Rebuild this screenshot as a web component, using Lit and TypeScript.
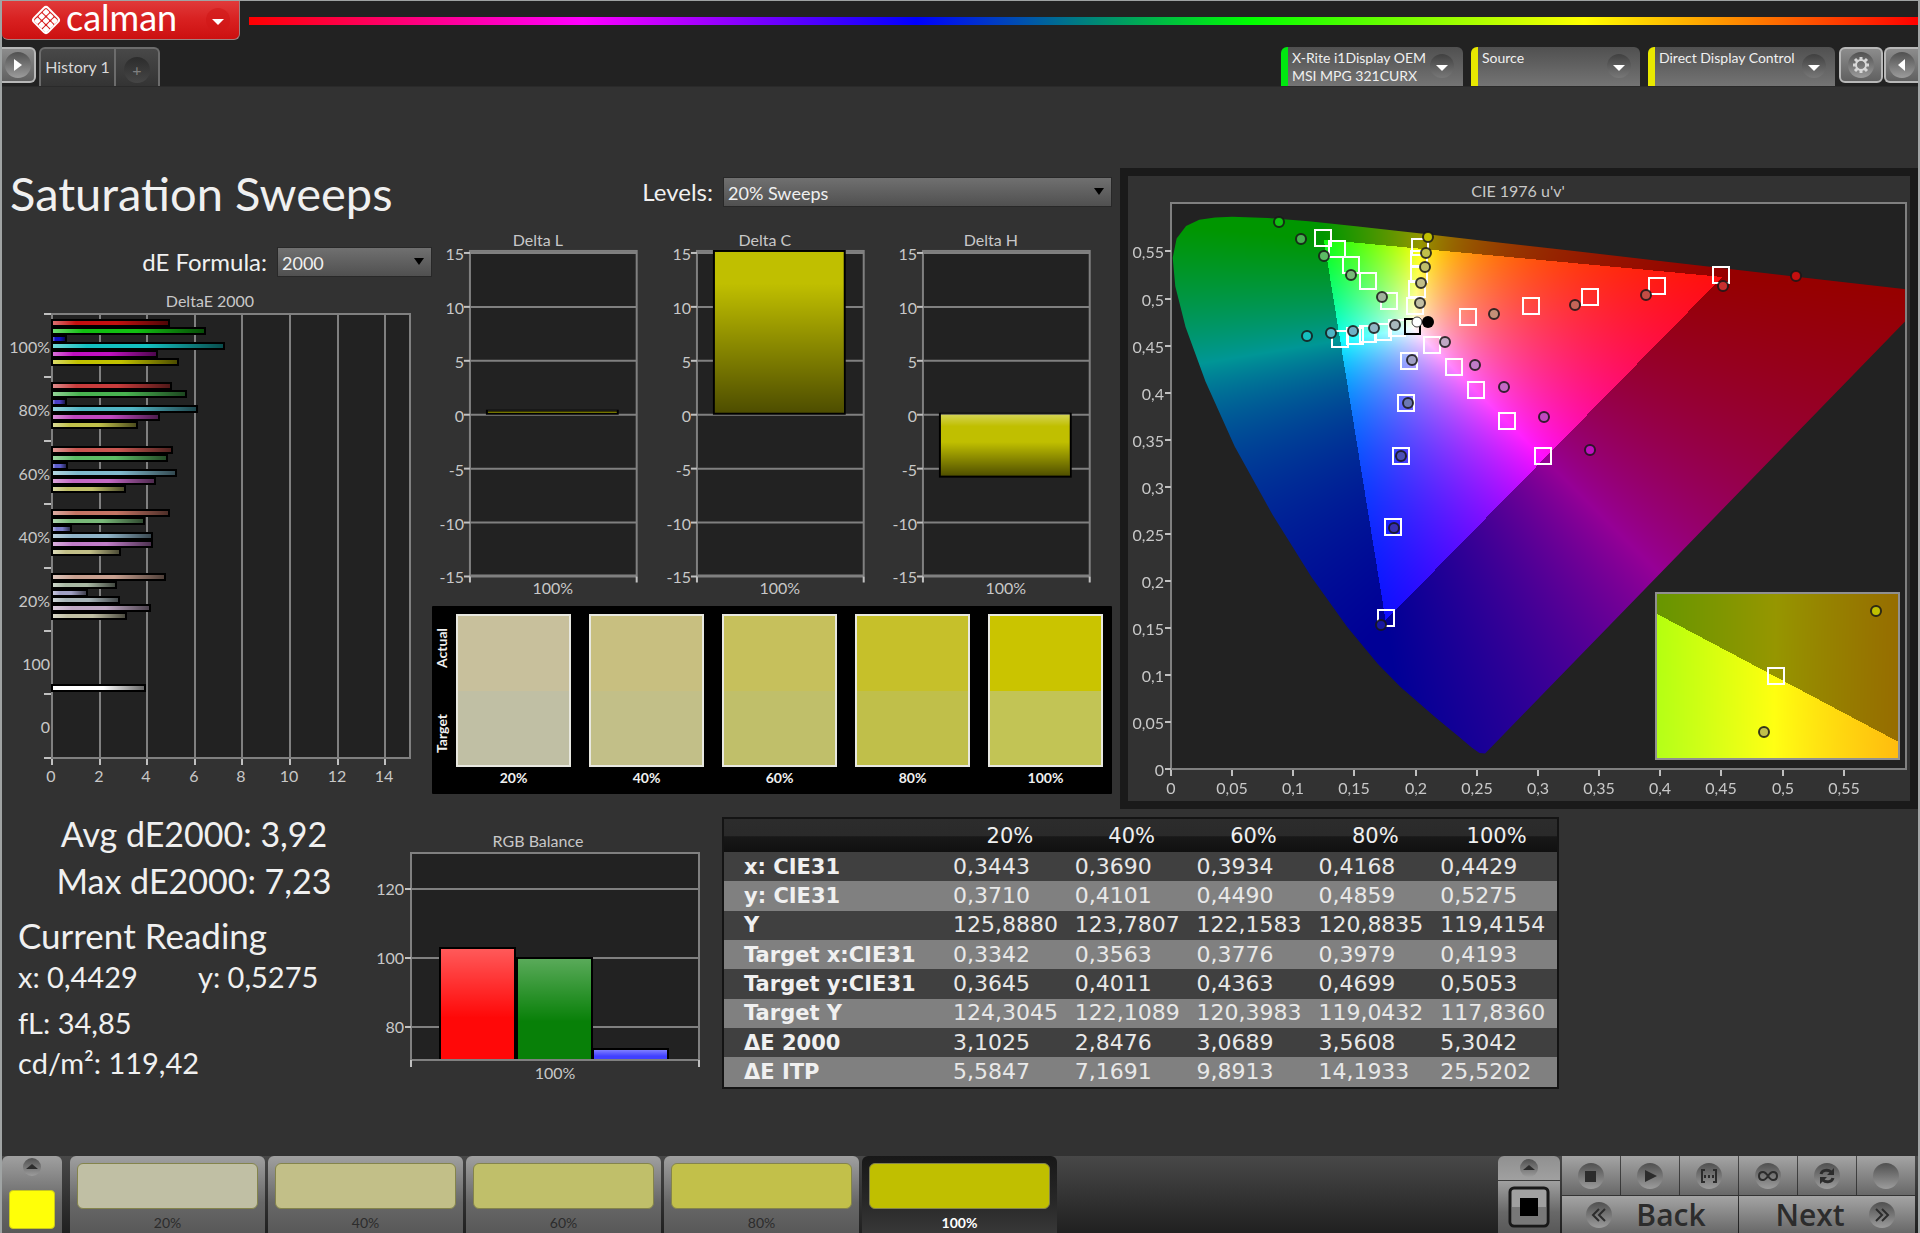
import { LitElement, html, svg, css } from "lit";
import { customElement, query, state } from "lit/decorators.js";
import { classMap } from "lit/directives/class-map.js";
import { styleMap } from "lit/directives/style-map.js";

/* ---------- measurement data ---------- */

interface SweepGroup {
  label: string;
  bars: [number, string][];
}

const DELTA_E: SweepGroup[] = [
  { label: "100%", bars: [[4.92, "#c40f0f"], [6.43, "#12c012"], [0.59, "#1010c4"], [7.23, "#14c0c0"], [4.41, "#c010c0"], [5.3, "#c0c000"]] },
  { label: "80%", bars: [[5, "#c83c3c"], [5.63, "#48b250"], [0.59, "#4a3cc4"], [6.11, "#50b4c4"], [4.48, "#c048c0"], [3.56, "#c0c04a"]] },
  { label: "60%", bars: [[5.06, "#c85650"], [4.85, "#5cbc64"], [0.63, "#5c5ccc"], [5.19, "#80b8cc"], [4.31, "#c468c4"], [3.07, "#c0bf6a"]] },
  { label: "40%", bars: [[4.92, "#c47464"], [3.87, "#78b878"], [0.78, "#7c7cc8"], [4.2, "#90b4c8"], [4.2, "#c07cc8"], [2.85, "#c2bf88"]] },
  { label: "20%", bars: [[4.75, "#c8a090"], [2.67, "#a8b8a4"], [1.45, "#a0a0c4"], [2.83, "#a8b4b8"], [4.1, "#c0a8c4"], [3.1, "#c0bfa4"]] },
  { label: "100", bars: [] },
  { label: "0", bars: [] },
];

const DELTAS = [
  { title: "Delta L", value: 0.35 },
  { title: "Delta C", value: 15.3 },
  { title: "Delta H", value: -5.7 },
];

const SWATCHES = [
  { label: "20%", actual: "#c8c09c", target: "#c0bfa4" },
  { label: "40%", actual: "#c8bf80", target: "#c2bf88" },
  { label: "60%", actual: "#c6c05c", target: "#c0bf6a" },
  { label: "80%", actual: "#c6c02a", target: "#c0bf4a" },
  { label: "100%", actual: "#cac400", target: "#c2c455" },
];

const STEPS = [
  { label: "20%", color: "#c0bfa4" },
  { label: "40%", color: "#c2bf88" },
  { label: "60%", color: "#c0bf6a" },
  { label: "80%", color: "#c2c04a" },
  { label: "100%", color: "#c0bf00" },
];

const TABLE: [string, ...string[]][] = [
  ["x: CIE31", "0,3443", "0,3690", "0,3934", "0,4168", "0,4429"],
  ["y: CIE31", "0,3710", "0,4101", "0,4490", "0,4859", "0,5275"],
  ["Y", "125,8880", "123,7807", "122,1583", "120,8835", "119,4154"],
  ["Target x:CIE31", "0,3342", "0,3563", "0,3776", "0,3979", "0,4193"],
  ["Target y:CIE31", "0,3645", "0,4011", "0,4363", "0,4699", "0,5053"],
  ["Target Y", "124,3045", "122,1089", "120,3983", "119,0432", "117,8360"],
  ["ΔE 2000", "3,1025", "2,8476", "3,0689", "3,5608", "5,3042"],
  ["ΔE ITP", "5,5847", "7,1691", "9,8913", "14,1933", "25,5202"],
];

/* Spectral locus in u'v', 380 nm to 700 nm. */
const LOCUS: [number, number][] = [
  [0.2568, 0.0166], [0.2522, 0.0169], [0.2461, 0.0226], [0.2347, 0.035], [0.2161, 0.0549],
  [0.1877, 0.0871], [0.169, 0.1119], [0.1441, 0.151], [0.1147, 0.2044], [0.0828, 0.2708],
  [0.0521, 0.3427], [0.0282, 0.4117], [0.0119, 0.4698], [0.0035, 0.5131], [0.0014, 0.5432],
  [0.0046, 0.5638], [0.0123, 0.577], [0.0231, 0.5837], [0.036, 0.5861], [0.0501, 0.5868],
  [0.0792, 0.5856], [0.1127, 0.5821], [0.1531, 0.5766], [0.2026, 0.5694], [0.2623, 0.5604],
  [0.3315, 0.5501], [0.4035, 0.5393], [0.4692, 0.5296], [0.5203, 0.5219], [0.583, 0.5125],
  [0.6234, 0.5065],
];

/* Chart positions of the target squares. */
const TARGETS: [number, number][] = [
  [1323, 238], [1337, 249], [1351, 265], [1368, 281], [1389, 301],
  [1420, 247], [1419, 259], [1419, 274], [1417, 289], [1415, 306],
  [1340, 339], [1355, 336], [1368, 334], [1383, 332], [1397, 328],
  [1432, 345], [1454, 367], [1476, 390], [1507, 421], [1543, 456],
  [1409, 361], [1406, 403], [1401, 456], [1393, 527], [1386, 618],
  [1468, 317], [1531, 306], [1590, 297], [1657, 286], [1721, 275],
];

/* Chart positions and colours of the measured points. */
const READINGS: [number, number, string][] = [
  [1279, 222, "#12c012"], [1301, 239, "#48b250"], [1324, 256, "#5cbc64"], [1351, 275, "#78b878"], [1382, 297, "#a0b09c"],
  [1428, 237, "#c0c000"], [1426, 253, "#c0c04a"], [1425, 267, "#c0bf6a"], [1421, 283, "#c2bf88"], [1420, 303, "#c0bfa4"],
  [1307, 336, "#14c0c0"], [1331, 333, "#50b4c4"], [1353, 331, "#70b0c4"], [1374, 328, "#90b4c4"], [1395, 325, "#a8b8bc"],
  [1445, 342, "#c0a8c4"], [1475, 365, "#c07cc8"], [1504, 387, "#c468c4"], [1544, 417, "#c048c0"], [1590, 450, "#c010c0"],
  [1412, 360, "#a0a0c4"], [1408, 403, "#6c78b4"], [1401, 456, "#4c50b4"], [1394, 528, "#3830b0"], [1381, 625, "#1818a0"],
  [1494, 314, "#c49078"], [1575, 305, "#c46458"], [1646, 295, "#c44c44"], [1723, 286, "#c83030"], [1796, 276, "#c40f0f"],
];

const PLOT = { left: 1171, top: 203, right: 1906, bottom: 769, perU: 1223, perV: 941 };
const INSET = { left: 1656, top: 593, width: 243, height: 166 };

/* ---------- chromaticity colour ---------- */

function chromaColor(u: number, v: number): [number, number, number] {
  const d = 6 * u - 16 * v + 12;
  const x = (9 * u) / d;
  const y = Math.max((4 * v) / d, 0.0001);
  const X = x / y;
  const Z = (1 - x - y) / y;
  const rgb = [
    3.2406 * X - 1.5372 - 0.4986 * Z,
    -0.9689 * X + 1.8758 + 0.0415 * Z,
    0.0557 * X - 0.204 + 1.057 * Z,
  ];
  const inside = Math.min(...rgb) >= 0;
  const max = Math.max(...rgb);
  const out = rgb.map((c) => {
    const n = Math.max(0, c) / max;
    return inside ? 14 + 241 * n : 150 * n;
  });
  return [out[0], out[1], out[2]];
}

function paint(canvas: HTMLCanvasElement, uv: (x: number, y: number) => [number, number]) {
  const ctx = canvas.getContext("2d")!;
  const { width, height } = canvas;
  const image = ctx.createImageData(width, height);
  for (let j = 0; j < height; j++) {
    for (let i = 0; i < width; i++) {
      const c = chromaColor(...uv(i, j));
      const k = (j * width + i) * 4;
      image.data[k] = c[0];
      image.data[k + 1] = c[1];
      image.data[k + 2] = c[2];
      image.data[k + 3] = 255;
    }
  }
  ctx.putImageData(image, 0, 0);
  return ctx;
}

const shade = svg`
  <defs>
    <linearGradient id="across"><stop offset="0" stop-color="#fff" stop-opacity=".4"/><stop offset=".2" stop-color="#fff" stop-opacity="0"/><stop offset=".55" stop-color="#000" stop-opacity="0"/><stop offset="1" stop-color="#000" stop-opacity=".6"/></linearGradient>
    <linearGradient id="down" x2="0" y2="1"><stop offset="0" stop-color="#fff" stop-opacity=".35"/><stop offset=".2" stop-color="#fff" stop-opacity="0"/><stop offset=".45" stop-color="#000" stop-opacity="0"/><stop offset="1" stop-color="#000" stop-opacity=".6"/></linearGradient>
    <linearGradient id="deep" x2="0" y2="1"><stop offset=".2" stop-color="#000" stop-opacity="0"/><stop offset="1" stop-color="#000" stop-opacity=".6"/></linearGradient>
    <linearGradient id="gloss" x2="0" y2="1"><stop offset="0" stop-color="#fff" stop-opacity=".33"/><stop offset=".62" stop-color="#fff" stop-opacity="0"/></linearGradient>
  </defs>`;

const chartStyles = css`
  :host { display: block; min-width: 0; }
  svg { display: block; width: 100%; height: auto; }
  text { font: 16px Lato, "Noto Sans", sans-serif; fill: #c8c8c8; }
  .mid { text-anchor: middle; }
  .end { text-anchor: end; }
  .plot { fill: #222; stroke: #808080; stroke-width: 2; }
  .grid { stroke: #808080; stroke-width: 2; fill: none; }
  .tick { stroke: #c0c0c0; stroke-width: 2; fill: none; }
  .edge { stroke: #000; stroke-width: 2; }
`;

/* ---------- charts ---------- */

@customElement("delta-e-chart")
class DeltaEChart extends LitElement {
  static styles = chartStyles;
  render() {
    const x = (n: number) => Math.round(52 + n * 23.8);
    const y = (i: number) => Math.round(314 + i * 63.4);
    const marks = [0, 2, 4, 6, 8, 10, 12, 14];
    const bar = (value: number, color: string, cy: number) => svg`
      <rect class="edge" x="52" y=${cy - 3} width=${x(value) - 52} height="6" fill=${color}/>
      <rect x="53" y=${cy - 2} width=${x(value) - 54} height="4" fill="url(#across)"/>`;
    return html`
      <svg viewBox="2 288 430 506" role="img" aria-label="DeltaE 2000">
        ${shade}
        <text class="mid" x="210" y="307">DeltaE 2000</text>
        <rect class="plot" x="52" y="314" width="358" height="444"/>
        ${marks.map((m) => svg`
          <path class="grid" d="M${x(m)} 314V758"/>
          <path class="tick" d="M${x(m)} 759v6"/>
          <text class="mid" x=${x(m) - 1} y="782">${m}</text>`)}
        ${[0, 1, 2, 3, 4, 5, 6, 7].map((i) => svg`<path class="tick" d="M44 ${y(i)}h7"/>`)}
        ${DELTA_E.map((g, i) => svg`
          <text class="end" x="50" y=${y(i) + 39}>${g.label}</text>
          ${g.bars.map(([v, c], k) => bar(v, c, y(i) + 9 + Math.round(k * 7.8)))}`)}
        ${bar(3.92, "#fff", 688)}
      </svg>`;
  }
}

@customElement("delta-charts")
class DeltaCharts extends LitElement {
  static styles = [chartStyles, css`
    .row { display: grid; grid-template-columns: repeat(3, 1fr); }
  `];
  render() {
    const y = (n: number) => Math.round(415 - n * 10.8);
    return html`<div class="row">
      ${DELTAS.map(({ title, value }) => {
        const top = Math.max(251, value > 0 ? y(value) : 414);
        const bottom = value > 0 ? 414 : y(value);
        return html`
          <svg viewBox="0 228 227 370" role="img" aria-label=${title}>
            ${shade}
            <text class="mid" x="106" y="246">${title}</text>
            <rect class="plot" x="38" y="251" width="167" height="325"/>
            ${[15, 10, 5, 0, -5, -10, -15].map((m) => svg`
              <path class="grid" d="M38 ${y(m)}h167"/>
              <path class="tick" d="M32 ${y(m)}h6"/>
              <text class="end" x="32" y=${y(m) + 7}>${m}</text>`)}
            <path class="tick" d="M38 577v6M205 577v6"/>
            <rect class="edge" x="55" y=${top} width="131" height=${bottom - top} fill="#c0bf00"/>
            <rect x="56" y=${top} width="129" height=${bottom - top} fill=${value > 10 ? "url(#deep)" : "url(#down)"}/>
            <text class="mid" x="121" y="595">100%</text>
          </svg>`;
      })}
    </div>`;
  }
}

@customElement("rgb-balance")
class RgbBalance extends LitElement {
  static styles = chartStyles;
  render() {
    const bars: [number, number, string][] = [[440, 948, "#ff0808"], [517, 958, "#088008"], [593, 1049, "#4040ff"]];
    return html`
      <svg viewBox="364 809 358 275" role="img" aria-label="RGB Balance">
        ${shade}
        <text class="mid" x="538" y="847">RGB Balance</text>
        <rect class="plot" x="411" y="853" width="288" height="207"/>
        ${[[120, 889], [100, 958], [80, 1027]].map(([m, y]) => svg`
          <path class="grid" d="M411 ${y}h288"/>
          <path class="tick" d="M405 ${y}h6"/>
          <text class="end" x="404" y=${y + 6}>${m}</text>`)}
        ${bars.map(([x, y, c]) => svg`
          <rect class="edge" x=${x} y=${y} width="75" height=${1060 - y} fill=${c}/>
          <rect x=${x + 1} y=${y + 1} width="73" height=${1059 - y} fill="url(#gloss)"/>`)}
        <path class="grid" d="M411 1060h288"/>
        <path class="tick" d="M411 1060v7M699 1060v7"/>
        <text class="mid" x="555" y="1079">100%</text>
      </svg>`;
  }
}

@customElement("cie-chart")
class CieChart extends LitElement {
  static styles = [chartStyles, css`
    canvas { display: block; }
    .target { fill: none; stroke: #fff; stroke-width: 2; }
    .white-target { fill: none; stroke: #000; stroke-width: 2; }
    .reading { stroke: #181818; stroke-opacity: .85; stroke-width: 2; }
    .inset { fill: none; stroke: #909090; stroke-width: 2; }
  `];

  @query(".diagram") diagram!: HTMLCanvasElement;
  @query(".detail") detail!: HTMLCanvasElement;

  firstUpdated() {
    const { left, top, bottom, perU, perV } = PLOT;
    const ctx = paint(this.diagram, (i, j) => [(i + 0.5) / perU, (bottom - top - j - 0.5) / perV]);
    ctx.globalCompositeOperation = "destination-in";
    ctx.beginPath();
    LOCUS.forEach(([u, v]) => ctx.lineTo(u * perU, bottom - top - v * perV));
    ctx.closePath();
    ctx.fill();
    paint(this.detail, (i, j) => [
      0.2042 + (INSET.left + i - 1776) * 0.00017,
      0.5529 - (INSET.top + j - 676) * 0.000039,
    ]);
  }

  render() {
    const { left, top, right, bottom, perU, perV } = PLOT;
    const steps = Array.from({ length: 12 }, (_, i) => i * 0.05);
    const name = (n: number) => String(Number(n.toFixed(2))).replace(".", ",");
    return html`
      <svg viewBox="1128 176 782 625" role="img" aria-label="CIE 1976 u'v'">
        <text class="mid" x="1518" y="197">CIE 1976 u'v'</text>
        <rect class="plot" x=${left} y=${top} width=${right - left} height=${bottom - top}/>
        <foreignObject x=${left} y=${top} width=${right - left} height=${bottom - top}>
          <canvas class="diagram" width=${right - left} height=${bottom - top}></canvas>
        </foreignObject>
        <rect class="grid" x=${left} y=${top} width=${right - left} height=${bottom - top}/>
        ${steps.map((s) => {
          const x = Math.round(left + s * perU);
          const y = Math.round(bottom - s * perV);
          return svg`
            <path class="tick" d="M${x} ${bottom + 1}v6M${left - 6} ${y}h6"/>
            <text class="mid" x=${x} y="794">${name(s)}</text>
            <text class="end" x="1164" y=${y + 7}>${name(s)}</text>`;
        })}
        ${TARGETS.map(([x, y]) => svg`<rect class="target" x=${x - 8} y=${y - 8} width="16" height="16"/>`)}
        <rect class="white-target" x="1405" y="319" width="15" height="15"/>
        ${READINGS.map(([x, y, c]) => svg`<circle class="reading" cx=${x} cy=${y} r="5" fill=${c}/>`)}
        <circle cx="1417" cy="322" r="5" fill="#fff" stroke="#404040" stroke-width="1"/>
        <circle cx="1428" cy="322" r="6" fill="#000"/>
        <foreignObject x=${INSET.left} y=${INSET.top} width=${INSET.width} height=${INSET.height}>
          <canvas class="detail" width=${INSET.width} height=${INSET.height}></canvas>
        </foreignObject>
        <rect class="inset" x=${INSET.left} y=${INSET.top} width=${INSET.width} height=${INSET.height}/>
        <rect class="target" x="1768" y="668" width="16" height="16"/>
        <circle class="reading" cx="1876" cy="611" r="5" fill="#c0c000"/>
        <circle class="reading" cx="1764" cy="732" r="5" fill="#c0c04a"/>
      </svg>`;
  }
}

/* ---------- icons ---------- */

const arrowDown = html`<svg class="knob" viewBox="0 0 26 26" aria-hidden="true"><circle cx="13" cy="13" r="12"/><path class="lit" d="M7 12h12l-6 6z"/></svg>`;
const arrowUp = html`<svg class="knob small" viewBox="0 0 20 20" aria-hidden="true"><circle cx="10" cy="10" r="9"/><path class="ink" d="M4 12h12l-6-5z"/></svg>`;

const TRANSPORT = [
  { name: "Stop", icon: svg`<path class="ink" d="M7 8h11v11H7z"/>` },
  { name: "Play", icon: svg`<path class="ink" d="M8 7l12 6-12 6z"/>` },
  { name: "Read series", icon: svg`<path class="line" d="M9 7H6v12h3M17 7h3v12h-3"/><path class="ink" d="M8 12h2v3H8zM12 12h2v3h-2zM16 12h2v3h-2z"/>` },
  { name: "Continuous", icon: svg`<path class="line" d="M13 13c-2-3-3-4-5-4s-4 1-4 4 2 4 4 4 3-1 5-4 3-4 5-4 4 1 4 4-2 4-4 4-3-1-5-4z"/>` },
  { name: "Repeat", icon: svg`<path class="bold" d="M7 11c1-4 7-5 10-2M19 15c-1 4-7 5-10 2"/><path class="ink" d="M20 5v7h-7zM6 21v-7h7z"/>` },
  { name: "Blank", icon: svg`` },
];

/* ---------- page ---------- */

@customElement("app-root")
class AppRoot extends LitElement {
  @state() private step = "100%";

  static styles = css`
    :host {
      display: flex;
      flex-direction: column;
      box-sizing: border-box;
      min-height: 100vh;
      border: solid #a0a4a4;
      border-width: 1px 2px 0 2px;
      background: #323232;
      color: #f0f0f0;
      font: 16px/20px Lato, "Noto Sans", sans-serif;
    }
    * { box-sizing: border-box; }
    button, select { font: inherit; color: inherit; border: 0; margin: 0; padding: 0; cursor: pointer; }
    button { flex: none; }

    /* top bar */
    .top { background: #222; height: 86px; display: flex; flex-direction: column; justify-content: space-between; border-bottom: 1px solid #2a2a2a; }
    .brand-row { display: flex; gap: 9px; }
    .brand { display: flex; align-items: center; width: 238px; height: 39px; padding: 0 8px 0 28px; gap: 4px; background: linear-gradient(#e03a3a, #d82020 50%, #cc1010); border: solid #a08080; border-width: 0 1px 1px 0; border-radius: 0 0 6px 6px; }
    .mark { width: 32px; height: 32px; }
    .word { font-size: 36px; line-height: 30px; height: 36px; color: #fff; flex: 1; text-align: left; }
    .spectrum { flex: 1; height: 8px; margin-top: 16px; background: linear-gradient(90deg, #f00, #f0f, #00f, #0f0, #ff0, #f00); }
    .tab-row { display: flex; align-items: flex-end; height: 39px; gap: 3px; }
    .knob { width: 26px; height: 26px; flex: none; }
    .knob.small { width: 20px; height: 20px; }
    .knob circle { fill: url(#knob); }
    .lit { fill: #fff; }
    .ink { fill: #2c2c2c; }
    .line { fill: none; stroke: #2c2c2c; stroke-width: 2; }
    .bold { fill: none; stroke: #2c2c2c; stroke-width: 3; }
    .brand .knob circle { fill: #d01818; fill-opacity: .6; }
    .device .knob circle { fill: url(#dim); }
    .square { display: flex; align-items: center; justify-content: center; width: 44px; height: 36px; margin-bottom: 3px; border: 2px solid #b8b8b8; border-radius: 6px; background: linear-gradient(#8c8c8c, #606060); }
    .square.left { width: 34px; border-left: 0; border-radius: 0 6px 6px 0; }
    .square.right { width: 34px; border-right: 0; border-radius: 6px 0 0 6px; margin-left: -2px; }
    .history { display: flex; height: 39px; border: solid #6c6c6c; border-width: 2px 2px 0; border-radius: 6px 6px 0 0; background: linear-gradient(#484848, #343434); color: #d8d8d8; }
    .history button { background: none; display: flex; align-items: center; justify-content: center; padding-bottom: 1px; }
    .history .name { width: 75px; border-right: 2px solid #6c6c6c; }
    .history .add { width: 42px; }
    .add span { width: 26px; height: 26px; margin-top: 6px; border-radius: 13px; background: linear-gradient(#2c2c2c, #464646); color: #808080; line-height: 26px; }
    .space { flex: 1; }
    .device { display: flex; align-items: flex-start; height: 39px; margin-right: 5px; padding: 2px 8px 0 4px; border-left: 7px solid #e8e800; border-radius: 6px 6px 0 0; background: linear-gradient(#505050, #747474); font-size: 14px; line-height: 18px; text-align: left; }
    .device.ready { border-left-color: #00e810; }
    .device span { flex: 1; white-space: nowrap; }
    .device .knob { margin-top: 4px; }
    .meter { width: 182px; }
    .source { width: 169px; }
    .display { width: 187px; margin-right: 1px; }

    /* work area */
    .upper { display: grid; grid-template-columns: 430fr 688fr 798fr; align-items: start; }
    .lower { display: grid; grid-template-columns: minmax(0, 362fr) minmax(0, 358fr) minmax(0, 837fr) minmax(0, 359fr); align-items: start; }
    h1 { margin: 79px 0 27px 8px; font-size: 47px; line-height: 54px; font-weight: 400; white-space: nowrap; }
    .field { display: flex; align-items: center; justify-content: flex-end; gap: 10px; height: 30px; font-size: 24px; white-space: nowrap; }
    .pick { display: grid; height: 30px; font-size: 18px; }
    .pick select, .pick svg { grid-area: 1 / 1; }
    .pick select { appearance: none; border: 1px solid #282828; padding: 2px 24px 0 4px; background: linear-gradient(#707070, #505050); border-radius: 0; }
    .pick option { background: #505050; }
    .pick svg { width: 12px; height: 8px; justify-self: end; align-self: center; margin-right: 7px; pointer-events: none; }
    .formula { width: 155px; }
    .levels { width: 389px; }
    .left-col delta-e-chart { margin-top: 11px; }
    .mid-col { padding: 90px 8px 0 0; }
    .mid-col delta-charts { margin: 21px 0 9px; }
    .panel { margin-top: 81px; border: 8px solid #1a1a1a; }
    .swatches { display: grid; grid-template-columns: minmax(0, 6fr) repeat(5, 115fr); column-gap: 18px; background: #000; padding: 8px 9px 5px 0; border-radius: 1px; font-size: 14px; font-weight: 700; }
    .sides { display: flex; flex-direction: column; justify-content: space-between; align-items: center; height: 153px; width: 20px; padding: 14px 0; }
    .sides span { writing-mode: vertical-rl; transform: rotate(180deg); line-height: 18px; }
    figure { margin: 0; text-align: center; }
    .chip { height: 153px; border: 2px solid #e8e8e0; display: grid; grid-template-rows: 1fr 1fr; }
    figcaption { line-height: 22px; }

    .stats { font-size: 34px; white-space: nowrap; }
    .summary { padding: 1px 0 0 22px; text-align: center; line-height: 47px; }
    .reading { padding: 10px 0 0 16px; }
    h2 { margin: 0; font-size: 35px; line-height: 42px; font-weight: 400; }
    .reading p { margin: 0; font-size: 29px; line-height: 40px; }
    .reading .pair { display: grid; grid-template-columns: 180px 1fr; margin: 1px 0 6px; }

    table { width: 100%; height: 272px; margin-top: 8px; table-layout: fixed; border-collapse: collapse; border: 2px solid #141414; font: 22px/24px "DejaVu Sans", "Noto Sans", sans-serif; white-space: nowrap; }
    .first { width: 226px; }
    thead th { height: 34px; padding: 0; font-size: 21px; font-weight: 400; background: linear-gradient(#2c2c2c, #2a2a2a 50%, #181818 54%, #101010); }
    tbody th { text-align: left; padding: 0 0 0 20px; font-size: 21px; font-weight: 700; }
    td { padding: 0 0 0 4px; color: #e8e8e8; }
    tbody tr { background: #404040; }
    tbody tr:nth-child(even) { background: #808080; }

    /* bottom bar */
    .bottom { margin-top: auto; height: 77px; display: flex; background: linear-gradient(#484848, #202020); color: #2c2c2c; }
    .bottom button { background: linear-gradient(#a0a0a0, #686868 60%, #585858); }
    .bottom .current { display: flex; flex-direction: column; align-items: center; justify-content: space-between; width: 60px; margin: 0 8px 0 0; padding: 1px 0 4px; border-radius: 6px 6px 0 0; }
    .now { width: 46px; height: 39px; border-radius: 4px; background: #ffff08; border: 1px solid #c8c820; }
    .steps { display: flex; gap: 3px; }
    .steps button { width: 195px; padding: 7px 7px 0; border-radius: 6px 6px 0 0; font-size: 14px; }
    .patch { display: block; height: 46px; border-radius: 6px; border: 1px solid #84844c; }
    .steps .text { display: block; line-height: 24px; margin-top: 2px; }
    .steps .active { background: linear-gradient(#181818, #282828 60%, #383838); color: #fff; font-weight: 700; }
    .window { display: grid; grid-template-rows: 24px 52px; gap: 1px; width: 62px; margin-right: 2px; }
    .window button { display: flex; align-items: center; justify-content: center; }
    .window button:first-child { border-radius: 6px 6px 0 0; background: linear-gradient(#909090, #a0a0a0); }
    .pattern { width: 42px; height: 42px; }
    .controls { display: grid; grid-template-columns: repeat(6, 58px); grid-template-rows: 39px 37px; gap: 1px; margin-right: 3px; }
    .controls button { display: flex; align-items: center; justify-content: center; background: linear-gradient(#a4a4a4, #686868); }
    .controls .nav { grid-column: span 3; gap: 24px; font: 600 30px/36px "Open Sans", "Noto Sans", sans-serif; }
    .controls .back { padding-right: 8px; }
    .controls .next { padding-left: 16px; }
  `;

  render() {
    return html`
      <header class="top">
        <div class="brand-row">
          <button class="brand" aria-label="Calman menu">
            <svg class="mark" viewBox="0 0 32 32" aria-hidden="true">
              <g transform="rotate(45 16 16)">
                <rect x="6" y="6" width="20" height="20" rx="3" fill="none" stroke="#fff" stroke-width="2"/>
                ${[0, 1, 2].map((i) => [0, 1, 2].map((j) => svg`<rect x=${8 + i * 6} y=${8 + j * 6} width="5" height="5" rx="1" fill="#fff"/>`))}
              </g>
            </svg>
            <span class="word">calman</span>
            ${arrowDown}
          </button>
          <div class="spectrum"></div>
        </div>
        <div class="tab-row">
          <button class="square left" aria-label="Expand">
            <svg class="knob" viewBox="0 0 26 26"><defs>
              <linearGradient id="knob" x2="0" y2="1"><stop offset="0" stop-color="#505050"/><stop offset="1" stop-color="#9c9c9c"/></linearGradient>
              <linearGradient id="dim" x2="0" y2="1"><stop offset="0" stop-color="#404040"/><stop offset="1" stop-color="#787878"/></linearGradient>
            </defs><circle cx="13" cy="13" r="13"/><path class="lit" d="M9 7v12l8-6z"/></svg>
          </button>
          <nav class="history" aria-label="History">
            <button class="name">History 1</button>
            <button class="add" aria-label="Add history"><span>+</span></button>
          </nav>
          <div class="space"></div>
          <button class="device ready meter"><span>X-Rite i1Display OEM<br>MSI MPG 321CURX</span>${arrowDown}</button>
          <button class="device source"><span>Source</span>${arrowDown}</button>
          <button class="device display"><span>Direct Display Control</span>${arrowDown}</button>
          <button class="square" aria-label="Settings">
            <svg class="knob" viewBox="0 0 26 26"><circle cx="13" cy="13" r="13"/><circle cx="13" cy="13" r="5" style="fill:none" stroke="#d8d8d8" stroke-width="2"/><path stroke="#d8d8d8" stroke-width="3" d="M13 5v3M13 18v3M5 13h3M18 13h3M7 7l3 3M16 16l3 3M19 7l-3 3M7 19l3-3"/></svg>
          </button>
          <button class="square right" aria-label="Collapse">
            <svg class="knob" viewBox="0 0 26 26"><circle cx="13" cy="13" r="13"/><path class="lit" d="M16 7v12l-7-6z"/></svg>
          </button>
        </div>
      </header>

      <main>
        <div class="upper">
          <section class="left-col">
            <h1>Saturation Sweeps</h1>
            <div class="field">
              <label for="formula">dE Formula:</label>
              <div class="pick formula">
                <select id="formula"><option>2000</option></select>
                <svg viewBox="0 0 12 8" aria-hidden="true"><path d="M1 0h10L6 7z"/></svg>
              </div>
            </div>
            <delta-e-chart></delta-e-chart>
          </section>

          <section class="mid-col">
            <div class="field">
              <label for="levels">Levels:</label>
              <div class="pick levels">
                <select id="levels"><option>20% Sweeps</option></select>
                <svg viewBox="0 0 12 8" aria-hidden="true"><path d="M1 0h10L6 7z"/></svg>
              </div>
            </div>
            <delta-charts></delta-charts>
            <div class="swatches">
              <div class="sides"><span>Actual</span><span>Target</span></div>
              ${SWATCHES.map((s) => html`
                <figure>
                  <div class="chip">
                    <span style=${styleMap({ background: s.actual })}></span>
                    <span style=${styleMap({ background: s.target })}></span>
                  </div>
                  <figcaption>${s.label}</figcaption>
                </figure>`)}
            </div>
          </section>

          <section class="panel"><cie-chart></cie-chart></section>
        </div>

        <div class="lower">
          <section class="stats">
            <div class="summary">
              <div>Avg dE2000: 3,92</div>
              <div>Max dE2000: 7,23</div>
            </div>
            <div class="reading">
              <h2>Current Reading</h2>
              <p class="pair"><span>x: 0,4429</span><span>y: 0,5275</span></p>
              <p>fL: 34,85</p>
              <p>cd/m²: 119,42</p>
            </div>
          </section>
          <rgb-balance></rgb-balance>
          <table>
            <thead>
              <tr><th class="first"></th>${SWATCHES.map((s) => html`<th scope="col">${s.label}</th>`)}</tr>
            </thead>
            <tbody>
              ${TABLE.map(([head, ...cells]) => html`
                <tr><th scope="row">${head}</th>${cells.map((c) => html`<td>${c}</td>`)}</tr>`)}
            </tbody>
          </table>
        </div>
      </main>

      <footer class="bottom">
        <button class="current" aria-label="Current patch">${arrowUp}<span class="now"></span></button>
        <div class="steps">
          ${STEPS.map((s) => html`
            <button class=${classMap({ active: s.label === this.step })} @click=${() => (this.step = s.label)}>
              <span class="patch" style=${styleMap({ background: s.color })}></span>
              <span class="text">${s.label}</span>
            </button>`)}
        </div>
        <div class="space"></div>
        <div class="window">
          <button aria-label="Raise pattern list">${arrowUp}</button>
          <button aria-label="Pattern window">
            <svg class="pattern" viewBox="0 0 42 42"><rect x="2" y="2" width="38" height="38" rx="4" fill="#a0a0a0" stroke="#181818" stroke-width="3"/><path fill="#787878" d="M4 21h34v17H4z"/><path d="M12 12h18v18H12z"/></svg>
          </button>
        </div>
        <div class="controls">
          ${TRANSPORT.map((t) => html`
            <button aria-label=${t.name}><svg class="knob" viewBox="0 0 26 26"><circle cx="13" cy="13" r="13"/>${t.icon}</svg></button>`)}
          <button class="nav back"><svg class="knob" viewBox="0 0 26 26" aria-hidden="true"><circle cx="13" cy="13" r="13"/><path class="line" d="M13 7l-6 6 6 6M19 7l-6 6 6 6"/></svg>Back</button>
          <button class="nav next">Next<svg class="knob" viewBox="0 0 26 26" aria-hidden="true"><circle cx="13" cy="13" r="13"/><path class="line" d="M7 7l6 6-6 6M13 7l6 6-6 6"/></svg></button>
        </div>
      </footer>
    `;
  }
}
